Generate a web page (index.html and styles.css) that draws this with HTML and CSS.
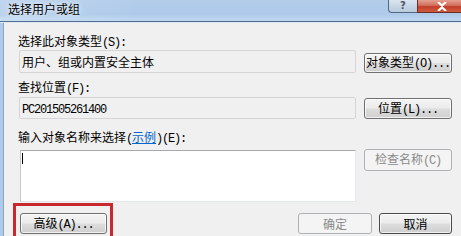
FILE: index.html
```html
<!DOCTYPE html>
<html lang="zh-CN">
<head>
<meta charset="utf-8">
<title>选择用户或组</title>
<link rel="stylesheet" href="styles.css">
</head>
<body>
<div class="window">
  <div class="titlebar">
    <span class="title">选择用户或组</span>
    <div class="caption-btns">
      <span class="cbtn help">?</span>
      <span class="cbtn close"><svg width="12" height="9" viewBox="0 0 12 9"><path d="M2 0 L6 3.5 L10 0 M2 9 L6 5.5 L10 9" stroke="#fff" stroke-width="2.2" fill="none"/></svg></span>
    </div>
  </div>
  <div class="frame">
    <div class="edge"></div>
    <div class="content">
      <div class="label l1">选择此对象类型<span class="m">(S):</span></div>
      <div class="row r1">
        <div class="field">用户、组或内置安全主体</div>
        <button class="btn b1">对象类型<span class="m">(O)...</span></button>
      </div>
      <div class="label l2">查找位置<span class="m">(F):</span></div>
      <div class="row r2">
        <div class="field"><span class="m">PC201505261400</span></div>
        <button class="btn b2">位置<span class="m">(L)...</span></button>
      </div>
      <div class="label l3">输入对象名称来选择<span class="m">(</span><a class="link">示例</a><span class="m">)(E):</span></div>
      <div class="row r3">
        <div class="input"><span class="caret"></span></div>
        <button class="btn disabled b3">检查名称<span class="m">(C)</span></button>
      </div>
      <div class="bottom">
        <button class="btn adv">高级<span class="m">(A)...</span></button>
        <div class="spacer"></div>
        <button class="btn disabled ok">确定</button>
        <button class="btn cancel">取消</button>
      </div>
    </div>
  </div>
  <div class="highlight"></div>
</div>
</body>
</html>
```
FILE: styles.css
```css
* { box-sizing: border-box; }
html, body { margin: 0; padding: 0; }
body {
  width: 461px;
  height: 236px;
  overflow: hidden;
  font-family: "Noto Sans CJK SC", "Liberation Sans", sans-serif;
  font-size: 12px;
  color: #000;
  background: #f0f0f0;
}
.window {
  position: relative;
  width: 461px;
  height: 236px;
  overflow: hidden;
  background: #f0f0f0;
}
.titlebar {
  height: 22px;
  display: flex;
  justify-content: space-between;
  align-items: flex-start;
  background: linear-gradient(90deg, rgba(255,255,255,0.18) 0%, rgba(255,255,255,0) 30%),
              linear-gradient(180deg, #b3cdea 0%, #aecaea 70%, #bcd5ef 88%, #bcd5ef 92%);
  border-bottom: 1px solid #4f6f94;
  box-shadow: 0 1px 0 #dfe8f2;
  position: relative;
}
.title {
  margin-left: 8px;
  margin-top: 2px;
  line-height: 14px;
  text-shadow: 0 0 6px #e8f1fb, 0 0 3px #e8f1fb;
}
.caption-btns {
  display: flex;
  margin-right: -3px;
}
.cbtn {
  display: flex;
  align-items: center;
  justify-content: center;
  height: 13px;
  border: 1px solid #53687f;
  border-top: none;
}
.help {
  width: 29px;
  border-radius: 0 0 0 4px;
  background: linear-gradient(180deg, #dbe5f0 0%, #c8d6e5 50%, #b9cbdd 100%);
  color: #4a5766;
  font-family: "DejaVu Sans", sans-serif;
  font-weight: bold;
  font-size: 10px;
  line-height: 12px;
  border-right: none;
}
.close {
  width: 47px;
  background: linear-gradient(180deg, #e4a091 0%, #d2705d 45%, #c23f2a 55%, #cf5a3c 100%);
  border-color: #6b2f2a;
  padding-left: 2px;
}
.frame {
  display: flex;
  height: 214px;
}
.edge {
  width: 4px;
  flex: none;
  background: #aecaea;
  border-right: 1px solid #8fa4bb;
}
.content {
  flex: 1;
  padding: 12px 9px 0 15px;
  display: flex;
  flex-direction: column;
}
.m {
  font-family: "Liberation Mono", monospace;
  font-size: 12px;
  letter-spacing: -1.2px;
}
.label {
  line-height: 14px;
  height: 14px;
  margin-left: -1px;
  white-space: nowrap;
}
.link {
  color: #0066cc;
  text-decoration: underline;
}
.row {
  display: grid;
  grid-template-columns: 1fr 88px;
  column-gap: 8px;
}
.r1 { margin-top: 2px; height: 23px; align-items: end; }
.l2 { margin-top: 7px; }
.r2 { margin-top: 3px; height: 22px; align-items: end; }
.l3 { margin-top: 11px; }
.r3 { margin-top: 6px; align-items: start; }
.field {
  height: 22px;
  border: 1px solid #d5d5d5;
  border-radius: 2px;
  background: #f0f0f0;
  padding: 0 0 0 2px;
  line-height: 20px;
  white-space: nowrap;
}
.r1 .field { height: 23px; line-height: 21px; }
.input {
  height: 52px;
  margin-left: 1px;
  border: 1px solid #e2e8ee;
  border-top-color: #a6aab0;
  border-left-color: #c4c8cc;
  background: #fff;
  padding: 2px 0 0 1px;
}
.caret {
  display: block;
  width: 1px;
  height: 11px;
  background: #000;
}
.btn {
  font-family: "Noto Sans CJK SC", "Liberation Sans", sans-serif;
  font-size: 12px;
  line-height: 14px;
  color: #000;
  padding: 0;
  border: 1px solid #707070;
  border-radius: 3px;
  background: linear-gradient(180deg, #f4f4f4 0%, #ebebeb 48%, #dddddd 52%, #cfcfcf 100%);
  box-shadow: inset 0 0 0 1px rgba(255,255,255,0.7);
  white-space: nowrap;
}
.b1 { height: 20px; }
.b2 { height: 21px; }
.b3 { height: 22px; margin-top: -1px; }
.btn.disabled {
  color: #8a8a8a;
  border-color: #adb2b5;
  background: #f4f4f4;
  box-shadow: none;
}
.bottom {
  display: flex;
  gap: 7px;
  margin-top: 11px;
  height: 21px;
}
.bottom .btn { height: 21px; }
.adv { width: 87px; margin-left: 1px; }
.spacer { flex: 1; }
.ok { width: 74px; }
.cancel { width: 73px; border-color: #4a4a4a; }
.highlight {
  position: absolute;
  left: 13px;
  top: 203px;
  width: 100px;
  height: 40px;
  border: 3px solid #c8282e;
}
```
